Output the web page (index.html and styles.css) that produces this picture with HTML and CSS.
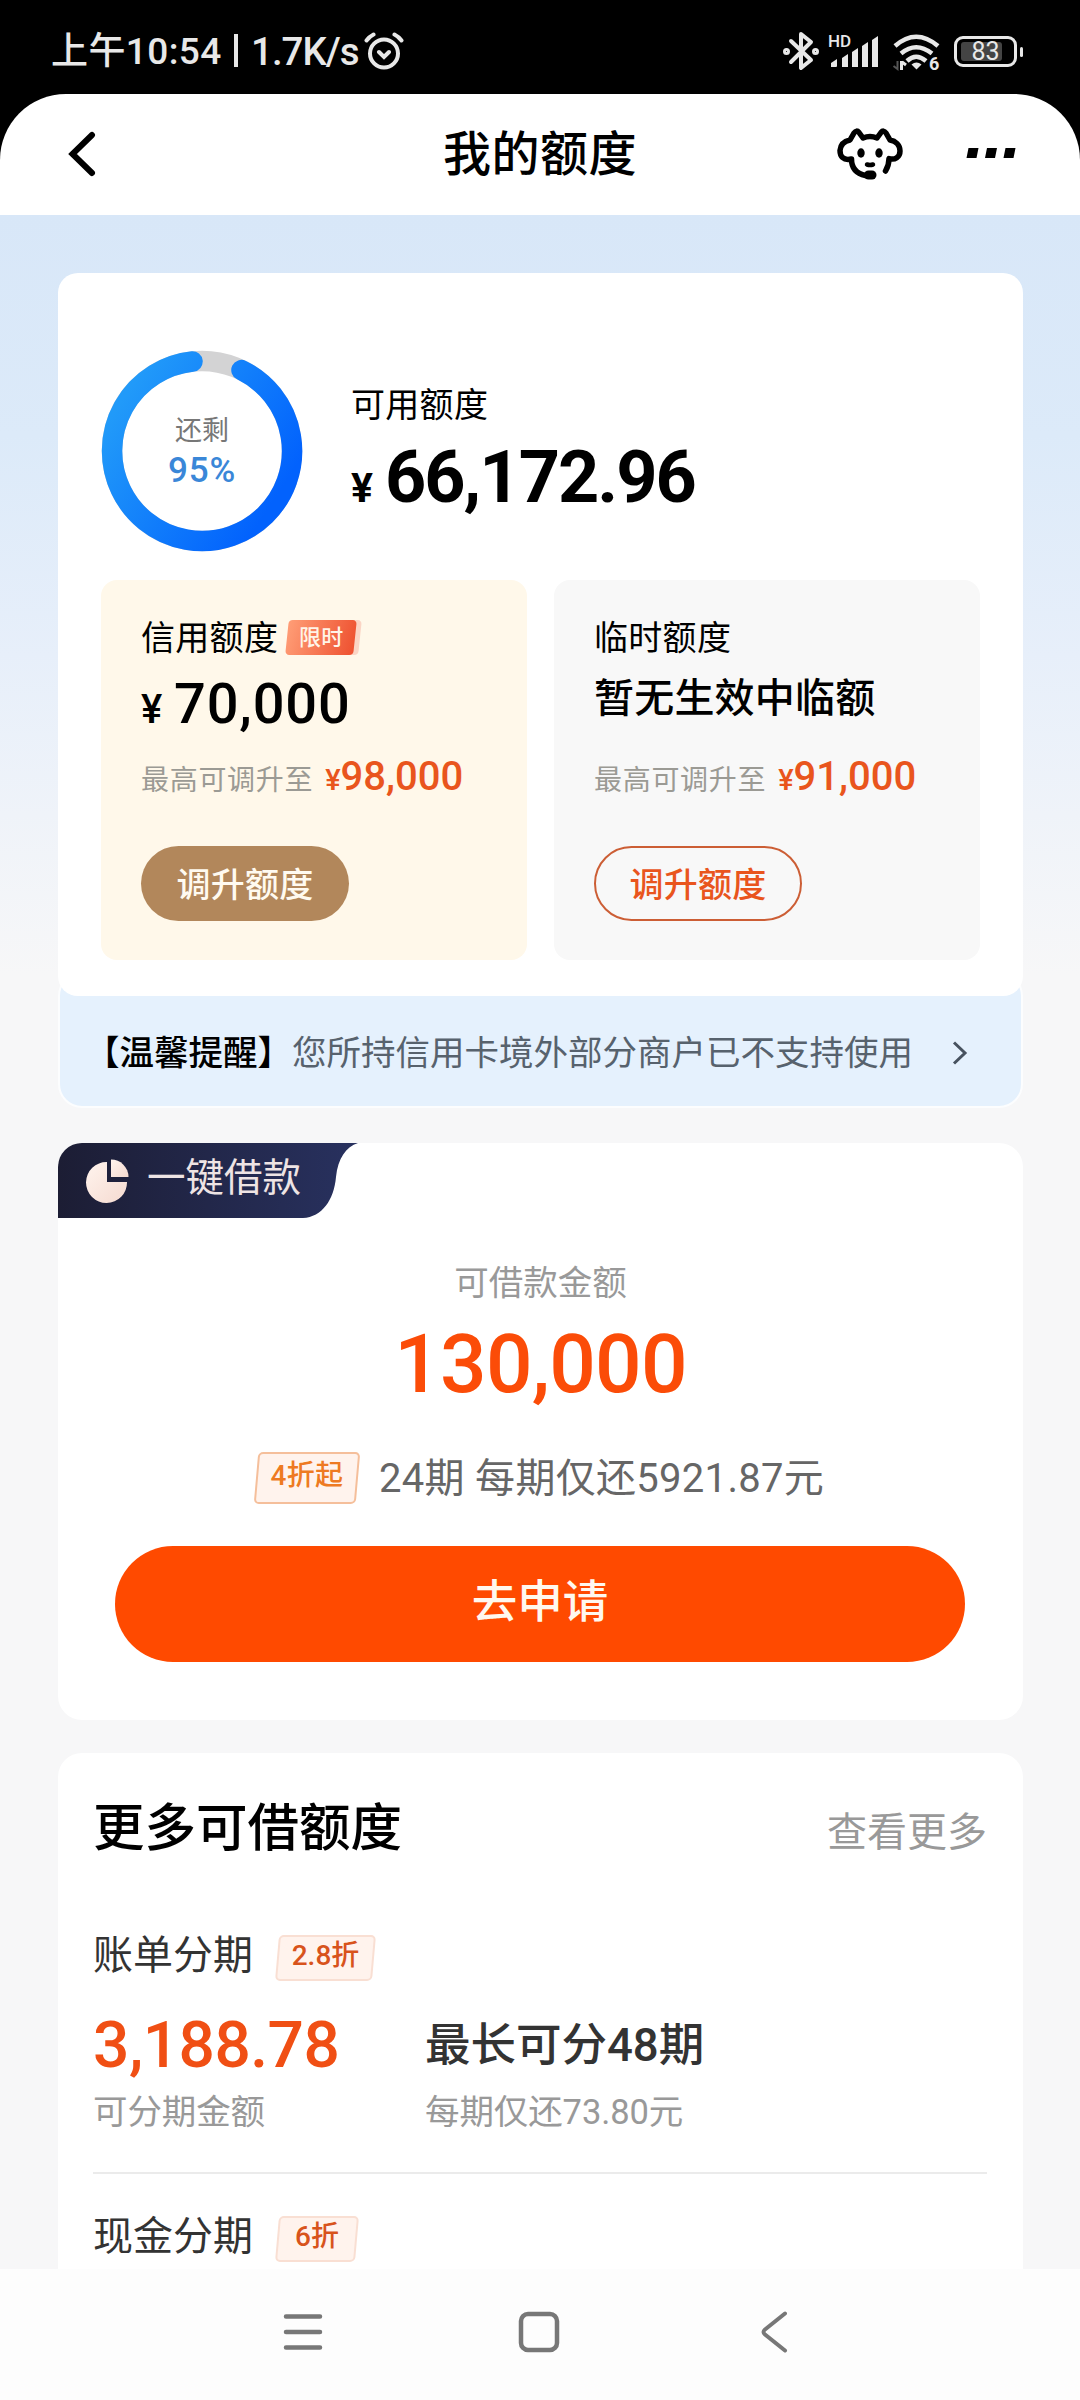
FILE: index.html
```html
<!DOCTYPE html>
<html lang="zh-CN">
<head>
<meta charset="utf-8">
<title>我的额度</title>
<link rel="stylesheet" href="styles.css">
</head>
<body>
<div class="status">
  <div class="status-left"><span class="clock">上午10:54</span><span class="bar"></span><span class="rate">1.7K/s</span>
    <svg class="alarm" width="40" height="38" viewBox="0 0 40 38" fill="none" stroke="#e8e8e8" stroke-width="4" stroke-linecap="round"><circle cx="20" cy="21.5" r="14"/><path d="M15 20l5 5 5-5M2.500 8.500q3-4 7-6M37.500 8.500q-3-4-7-6"/></svg>
  </div>
  <div class="status-right">
    <svg class="bt" width="36" height="40" viewBox="0 0 36 40" fill="none" stroke="#e8e8e8" stroke-width="4" stroke-linejoin="round" stroke-linecap="round"><path d="M8 10l20 19-10 8V3l10 8L8 31"/><circle cx="3.500" cy="20.500" r="1.500"/><circle cx="32.500" cy="20.500" r="1.500"/></svg>
    <svg class="signal" width="51" height="36" viewBox="0 0 51 36"><text x="-2" y="13" class="hd">HD</text><g fill="#e8e8e8"><path d="M1 33v-4l6-4v7q0 1-1 1zM12 33v-9l6-4v13zM22 33V18l6-4v19zM32 33V12l6-4v25zM42 33V6l6-4v31z"/></g></svg>
    <svg class="wifi" width="48" height="38" viewBox="0 0 48 38" fill="none" stroke="#e8e8e8" stroke-width="4.500"><path d="M2 13Q23-5.500 45 13M8 20.500Q23 8 39 20.500M14 28Q23 19.500 33 28"/><path d="M18.500 31.500q5-4 10 0l-5 5z" fill="#e8e8e8" stroke="none"/><path d="M8.500 28v9M9 29l4 3" stroke-width="3"/><path d="M4.500 28v8l-4-3" stroke-width="2" stroke="#555"/><text x="36" y="36.500" class="six">6</text></svg>
    <div class="battery"><span class="level"></span><span class="pct">83</span></div>
  </div>
</div>
<header class="topbar">
  <svg class="back" width="28" height="46" viewBox="0 0 28 46" fill="none" stroke="#000" stroke-width="6" stroke-linecap="round"><path d="M24 4L4.500 23 24 42"/></svg>
  <h1>我的额度</h1>
  <svg class="dog" width="66" height="52" viewBox="0 0 66 52" fill="none" stroke="#000" stroke-width="5.500" stroke-linecap="round" stroke-linejoin="round"><path d="M28.500 47.500C19 45.500 14.500 40 14.500 31C6 33 3 28 3 22.500C3.500 16 8.500 13 13 12L17 5Q19.500 1.500 22 4.500L26 10Q33 7 40 10L44 4.500Q46.500 1.500 49 5L53 12C58.500 13 63 17 63 23C63 29 58 32.500 52 30.500Q52 37.500 48.500 43"/><path d="M30 36.500q3 1 6 0" stroke-width="4.500"/><g fill="#000" stroke="none"><ellipse cx="24" cy="25" rx="3.700" ry="4.700"/><ellipse cx="42" cy="25" rx="3.700" ry="4.700"/><rect x="27" y="42.500" width="12.500" height="9" rx="4.500"/></g></svg>
  <svg class="more" width="50" height="12" viewBox="0 0 50 12"><path d="M2.500 1h10l-2 10h-10zM21 1h10l-2 10H19zM39.500 1h10l-2 10h-10z"/></svg>
</header>
<main>
  <section class="card quota">
    <div class="overview">
      <div class="ring">
        <svg width="202" height="202" viewBox="0 0 202 202" fill="none" stroke-width="20.500"><defs><linearGradient id="blue" x1="0" y1="0.300" x2="0.850" y2="0.850"><stop offset="0" stop-color="#219af9"/><stop offset="1" stop-color="#0262fd"/></linearGradient></defs><circle cx="101" cy="101" r="90" stroke="#d3d3d4"/><path d="M140.500 20.100A90 90 0 1 1 91.500 11.500" stroke="url(#blue)" stroke-linecap="round"/></svg>
        <div class="ring-text"><span class="left-label">还剩</span><span class="left-pct">95%</span></div>
      </div>
      <div class="available"><div class="label">可用额度</div><div class="total"><span class="yen">¥</span>66,172.96</div></div>
    </div>
    <div class="panels">
      <div class="panel gold">
        <div class="label">信用额度<span class="limited">限时</span></div>
        <div class="sum"><span class="yen">¥</span>70,000</div>
        <div class="raise"><span class="hint">最高可调升至</span><span class="yen">¥</span><b>98,000</b></div>
        <a class="pill solid">调升额度</a>
      </div>
      <div class="panel grey">
        <div class="label">临时额度</div>
        <div class="none">暂无生效中临额</div>
        <div class="raise"><span class="hint">最高可调升至</span><span class="yen">¥</span><b>91,000</b></div>
        <a class="pill outline">调升额度</a>
      </div>
    </div>
  </section>
  <div class="notice"><strong>【温馨提醒】</strong><span>您所持信用卡境外部分商户已不支持使用</span>
    <svg width="16" height="24" viewBox="0 0 16 24" fill="none" stroke="#47525f" stroke-width="3"><path d="M2 1.500L13 12 2 22.500"/></svg></div>
  <section class="card loan">
    <div class="ribbon">
      <svg class="ribbon-shape" width="300" height="75" viewBox="0 0 300 75"><defs><linearGradient id="navy"><stop offset="0" stop-color="#1c1d34"/><stop offset="1" stop-color="#28315f"/></linearGradient></defs><path d="M0 75V22Q0 0 22 0H300C288 4 280 15 278 34C276 57 264 74 245 75Z" fill="url(#navy)"/></svg>
      <svg class="pie" width="44" height="44" viewBox="0 0 44 44"><defs><linearGradient id="cream" y2="1"><stop offset="0" stop-color="#fff4ee"/><stop offset="1" stop-color="#f5dad0"/></linearGradient></defs><path d="M22 3A20.500 20.500 0 1 0 42 23H22Z" fill="url(#cream)"/><path d="M26 0.500A17.500 17.500 0 0 1 43.500 18H26Z" fill="url(#cream)"/></svg>
      <span>一键借款</span>
    </div>
    <div class="loan-label">可借款金额</div>
    <div class="loan-sum">130,000</div>
    <div class="plan"><span class="tag big">4折起</span><span>24期 每期仅还5921.87元</span></div>
    <a class="apply">去申请</a>
  </section>
  <section class="card more-list">
    <div class="list-head"><h2>更多可借额度</h2><a>查看更多</a></div>
    <div class="item">
      <div class="item-name">账单分期<span class="tag">2.8折</span></div>
      <div class="item-grid"><span class="money">3,188.78</span><span class="term">最长可分48期</span><span class="sub">可分期金额</span><span class="sub">每期仅还73.80元</span></div>
    </div>
    <div class="item second"><div class="item-name">现金分期<span class="tag short">6折</span></div></div>
  </section>
</main>
<nav>
  <svg width="40" height="42" viewBox="0 0 40 42" stroke="#777" stroke-width="4.500" stroke-linecap="round"><path d="M3 5.500h34M3 21h34M3 36.500h34"/></svg>
  <svg width="42" height="42" viewBox="0 0 42 42" fill="none" stroke="#777" stroke-width="4.500"><rect x="3" y="3" width="36" height="36" rx="7"/></svg>
  <svg width="28" height="42" viewBox="0 0 28 42" fill="none" stroke="#777" stroke-width="4" stroke-linecap="round"><path d="M25 2.500L5 18.500Q2 21 5 23.500L25 39.500"/></svg>
</nav>
</body>
</html>
```
FILE: styles.css
```css
* { box-sizing: border-box; }
body {
  margin: 0;
  width: 1080px;
  height: 2400px;
  overflow: hidden;
  display: flex;
  flex-direction: column;
  background: #000;
  color: #000;
  font-family: Roboto, "Noto Sans CJK SC", sans-serif;
}
svg { display: block; flex: none; }
h1, h2 { margin: 0; font-weight: 500; }

.status {
  height: 94px;
  flex: none;
  display: flex;
  justify-content: space-between;
  padding: 0 63px 0 51px;
  color: #e8e8e8;
}
.status-left { display: flex; font-size: 38.5px; line-height: 103px; font-weight: 500; white-space: nowrap; }
.clock { width: 183px; font-size: 37px; letter-spacing: 0.4px; }
.bar { width: 4px; height: 33px; margin-top: 34px; background: #e8e8e8; }
.rate { margin-left: 13px; width: 113px; letter-spacing: -1px; }
.alarm { margin-top: 32px; }
.status-right { display: flex; }
.bt { margin-top: 31px; }
.signal { margin: 34px 0 0 11px; overflow: visible; }
.hd { font: 500 17px Roboto, sans-serif; fill: #e8e8e8; }
.wifi { margin: 33px 0 0 12px; overflow: visible; }
.six { font: 700 18px Roboto, sans-serif; fill: #e8e8e8; stroke: none; }
.battery {
  position: relative;
  width: 63px;
  height: 31px;
  margin: 36px 0 0 13px;
  border: 3px solid #e8e8e8;
  border-radius: 9px;
  display: flex;
  align-items: center;
  justify-content: center;
}
.battery::after {
  content: "";
  position: absolute;
  right: -9px;
  top: 8px;
  width: 3px;
  height: 10px;
  border-radius: 2px;
  background: #e8e8e8;
}
.level { position: absolute; left: 4px; top: 3px; width: 41px; height: 19px; background: #444; border-radius: 3px; }
.pct { position: relative; font-size: 25px; font-weight: 400; line-height: 25px; }

.topbar {
  height: 121px;
  flex: none;
  background: #fff;
  border-radius: 66px 66px 0 0;
  display: flex;
  align-items: flex-start;
  padding-left: 68px;
}
.back { margin-top: 37px; }
.topbar h1 { width: 200px; margin: 25px 0 0 347px; font-size: 48px; line-height: 72px; letter-spacing: 0.5px; white-space: nowrap; }
.dog { margin: 34px 0 0 194px; }
.more { margin: 53px 0 0 63px; }

main {
  height: 2054px;
  flex: none;
  overflow: hidden;
  padding: 58px 57px 0 58px;
  background: linear-gradient(#d8e7f8 0, #dceaf9 220px, #e7effa 440px, #f7f7f8 760px);
}
.card { background: #fff; border-radius: 24px; }
.quota { position: relative; z-index: 1; height: 723px; padding: 77px 43px 0 43px; border-radius: 20px; }
.overview { display: flex; height: 230px; }
.ring { position: relative; width: 202px; height: 202px; }
.ring-text {
  position: absolute;
  inset: 0;
  display: flex;
  flex-direction: column;
  align-items: center;
  padding-top: 61px;
}
.left-label { font-size: 27px; line-height: 40px; color: #777; }
.left-pct { font-size: 35px; line-height: 40px; font-weight: 500; color: #3a87d8; letter-spacing: 0.8px; }
.available { margin-left: 48px; padding-top: 31px; }
.label { height: 50px; font-size: 34px; line-height: 49px; letter-spacing: 0.3px; white-space: nowrap; }
.total { margin-top: 5px; font-size: 72px; line-height: 84px; font-weight: 700; letter-spacing: -2px; }
.total .yen { font-size: 41px; margin-right: 12px; letter-spacing: 0; }

.panels { display: flex; gap: 27px; }
.panel { width: 426px; height: 380px; border-radius: 16px; padding: 34px 0 0 40px; }
.gold { background: #fff8ea; }
.grey { background: #f8f8f8; }
.limited {
  position: relative;
  z-index: 0;
  display: inline-block;
  margin-left: 7px;
  width: 72px;
  height: 35px;
  vertical-align: 5px;
  text-align: center;
  font-size: 22px;
  line-height: 36px;
  font-weight: 500;
  color: #fff4e8;
}
.limited::before, .limited::after {
  content: "";
  position: absolute;
  z-index: -1;
  inset: 0 2px;
  transform: skewX(-6deg);
  border-radius: 4px;
  background: linear-gradient(100deg, #ff9d76, #ee5130);
}
.limited::before { left: 8px; right: -3px; background: #fbd5c5; }
.sum { margin-top: 10px; height: 60px; font-size: 56px; line-height: 60px; font-weight: 500; letter-spacing: 0.8px; }
.sum .yen { font-size: 40px; line-height: 1; margin-right: 11px; }
.none { margin-top: 10px; height: 60px; font-size: 40px; line-height: 50px; font-weight: 500; letter-spacing: 0.2px; }
.raise { margin-top: 17px; height: 50px; font-size: 40px; line-height: 52px; color: #e9551d; white-space: nowrap; }
.raise b { font-weight: 500; }
.hint { font-size: 28px; letter-spacing: 0.7px; color: #9b9a94; margin-right: 12px; }
.raise .yen { font-size: 29px; font-weight: 500; }
.pill {
  display: flex;
  align-items: center;
  justify-content: center;
  width: 208px;
  height: 75px;
  margin-top: 45px;
  padding-bottom: 2px;
  border-radius: 38px;
  font-size: 34px;
  font-weight: 500;
  letter-spacing: 0.2px;
}
.solid { background: #b2875b; color: #fffaf0; }
.outline { border: 2px solid #cc5e35; color: #e9551d; }

.notice {
  height: 136px;
  margin-top: -24px;
  padding: 26px 0 0 25px;
  display: flex;
  align-items: center;
  border: 2px solid #fcfdfe;
  border-radius: 24px;
  background: #e5f1fd;
  font-size: 34.5px;
  line-height: 60px;
  white-space: nowrap;
}
.notice strong { font-weight: 500; }
.notice span { color: #57626d; }
.notice svg { margin-left: 39px; }

.loan { height: 577px; margin-top: 35px; overflow: hidden; text-align: center; }
.ribbon { position: relative; width: 300px; height: 75px; display: flex; align-items: flex-start; padding-left: 27px; }
.ribbon-shape { position: absolute; left: 0; top: 0; }
.pie { position: relative; margin-top: 16px; }
.ribbon span { position: relative; margin-left: 18px; font-size: 38.5px; line-height: 70px; color: #eee4e4; }
.loan-label { margin-top: 40px; font-size: 34.5px; line-height: 50px; color: #999; }
.loan-sum { margin-top: 11px; font-size: 82px; line-height: 90px; font-weight: 500; color: #fb4c08; letter-spacing: -0.8px; }
.plan { margin-top: 31px; height: 70px; display: flex; align-items: center; padding-left: 196px; font-size: 40px; color: #666; white-space: nowrap; letter-spacing: 0.3px; }
.tag {
  position: relative;
  z-index: 0;
  display: inline-block;
  margin-left: 26px;
  width: 101px;
  text-align: center;
  height: 46px;
  font-size: 28px;
  line-height: 42px;
  font-weight: 500;
  color: #d8531c;
}
.tag.short { width: 84px; }
.tag::before {
  content: "";
  position: absolute;
  z-index: -1;
  inset: 0 2px;
  transform: skewX(-5deg);
  border: 2px solid #f9dfd3;
  border-radius: 5px;
  background: #fff3ed;
}
.tag.big { margin: 6px 19px 0 0; height: 52px; width: 106px; line-height: 48px; color: #ee7a22; }
.tag.big::before { border-color: #f5bf9b; }
.apply {
  display: block;
  width: 850px;
  height: 116px;
  margin: 36px 0 0 57px;
  border-radius: 58px;
  background: #ff4a00;
  color: #fff8ef;
  font-size: 45.5px;
  line-height: 113px;
  font-weight: 500;
}

.more-list { height: 600px; margin-top: 33px; padding: 40px 36px 0 35px; }
.list-head { display: flex; justify-content: space-between; height: 72px; white-space: nowrap; }
.list-head h2 { font-size: 51.5px; line-height: 72px; }
.list-head a { font-size: 40px; line-height: 80px; color: #999; }
.item { height: 309px; padding-top: 61px; border-bottom: 2px solid #ebebeb; }
.item-name { height: 60px; display: flex; align-items: center; font-size: 40px; line-height: 60px; color: #333; white-space: nowrap; }
.item .tag { margin-left: 22px; margin-top: 3px; }
.item-grid { display: grid; grid-template-columns: 332px 1fr; grid-template-rows: 80px 52px; padding-top: 20px; white-space: nowrap; align-items: center; }
.money { font-size: 64px; line-height: 80px; font-weight: 500; color: #f04f14; letter-spacing: -0.5px; }
.term { font-size: 45.5px; line-height: 80px; font-weight: 500; color: #333; }
.sub { font-size: 34.5px; line-height: 52px; color: #999; letter-spacing: -0.1px; }
.second { border: 0; padding-top: 33px; }

nav {
  height: 131px;
  flex: none;
  background: #fdfdfd;
  display: flex;
  align-items: flex-start;
  padding: 42px 0 0 283px;
}
nav svg:nth-child(2) { margin-left: 195px; }
nav svg:nth-child(3) { margin-left: 200px; }
```
